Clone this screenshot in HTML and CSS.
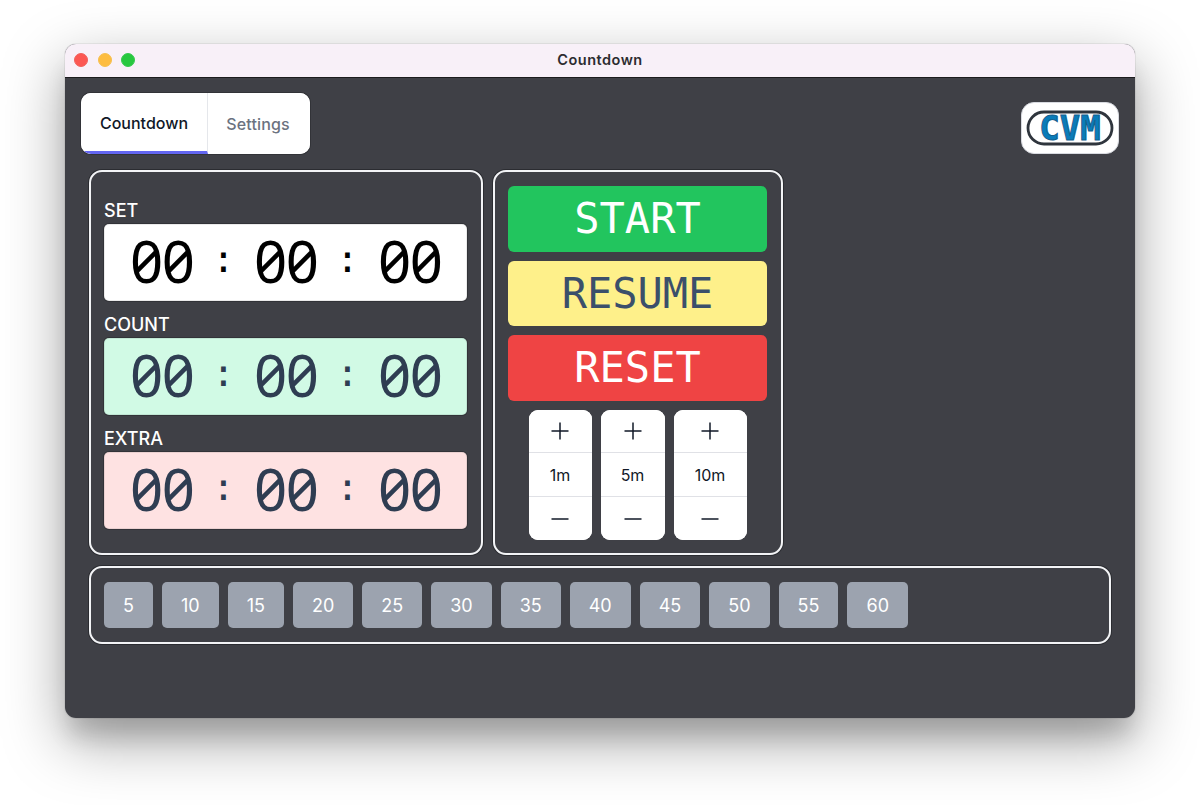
FILE: index.html
```html
<!DOCTYPE html>
<html lang="en">

<head>
    <meta charset="utf-8">
    <title>Countdown</title>
    <link rel="stylesheet" href="styles.css">
</head>

<body>
    <div class="window">
        <div class="titlebar">
            <div class="lights">
                <span class="light light-red"></span>
                <span class="light light-yellow"></span>
                <span class="light light-green"></span>
            </div>
            <div class="title">Countdown</div>
        </div>

        <div class="content">
            <div class="top-row">
                <div class="tabs">
                    <button class="tab tab-active">Countdown</button>
                    <button class="tab">Settings</button>
                </div>
                <div class="logo-box">
                    <svg class="logo" viewBox="0 0 88 38" width="88" height="38">
                        <rect x="2" y="3" width="84" height="32" rx="16" fill="#fff" stroke="#2f353d" stroke-width="2.8"/>
                        <text class="logo-text" x="44" y="30.5" text-anchor="middle">CVM</text>
                    </svg>
                </div>
            </div>

            <div class="panels">
                <div class="panel timers">
                    <div class="timer">
                        <label class="timer-label">SET</label>
                        <div class="timer-box box-set">
                            <span class="digits">00</span><span class="colon">:</span><span class="digits">00</span><span class="colon">:</span><span class="digits">00</span>
                        </div>
                    </div>
                    <div class="timer">
                        <label class="timer-label">COUNT</label>
                        <div class="timer-box box-count">
                            <span class="digits">00</span><span class="colon">:</span><span class="digits">00</span><span class="colon">:</span><span class="digits">00</span>
                        </div>
                    </div>
                    <div class="timer">
                        <label class="timer-label">EXTRA</label>
                        <div class="timer-box box-extra">
                            <span class="digits">00</span><span class="colon">:</span><span class="digits">00</span><span class="colon">:</span><span class="digits">00</span>
                        </div>
                    </div>
                </div>

                <div class="panel controls">
                    <button class="big-btn btn-start">START</button>
                    <button class="big-btn btn-resume">RESUME</button>
                    <button class="big-btn btn-reset">RESET</button>
                    <div class="steppers">
                        <div class="stepper stepper-1m">
                            <button class="step">
                                <svg viewBox="0 0 18 18" width="18" height="18"><path d="M0.5 9H17.5M9 0.5V17.5"/></svg>
                            </button>
                            <div class="step step-label">1m</div>
                            <button class="step">
                                <svg viewBox="0 0 18 18" width="18" height="18"><path d="M0.5 9H17.5"/></svg>
                            </button>
                        </div>
                        <div class="stepper stepper-5m">
                            <button class="step">
                                <svg viewBox="0 0 18 18" width="18" height="18"><path d="M0.5 9H17.5M9 0.5V17.5"/></svg>
                            </button>
                            <div class="step step-label">5m</div>
                            <button class="step">
                                <svg viewBox="0 0 18 18" width="18" height="18"><path d="M0.5 9H17.5"/></svg>
                            </button>
                        </div>
                        <div class="stepper stepper-10m">
                            <button class="step">
                                <svg viewBox="0 0 18 18" width="18" height="18"><path d="M0.5 9H17.5M9 0.5V17.5"/></svg>
                            </button>
                            <div class="step step-label">10m</div>
                            <button class="step">
                                <svg viewBox="0 0 18 18" width="18" height="18"><path d="M0.5 9H17.5"/></svg>
                            </button>
                        </div>
                    </div>
                </div>
            </div>

            <div class="panel presets">
                <button class="preset">5</button>
                <button class="preset">10</button>
                <button class="preset">15</button>
                <button class="preset">20</button>
                <button class="preset">25</button>
                <button class="preset">30</button>
                <button class="preset">35</button>
                <button class="preset">40</button>
                <button class="preset">45</button>
                <button class="preset">50</button>
                <button class="preset">55</button>
                <button class="preset">60</button>
            </div>
        </div>
    </div>
</body>

</html>
```

FILE: styles.css
```css
body {
    font-family: 'Inter', sans-serif;
    background-color: #fff;
    margin: 0;
    padding: 44px 65px 0;
    height: 805px;
    box-sizing: border-box;
    overflow: hidden;
}

button {
    font-family: inherit;
    border: none;
    padding: 0;
    cursor: pointer;
}

.window {
    width: 1070px;
    height: 674px;
    border-radius: 11px;
    overflow: hidden;
    box-shadow: 0 22px 22px -4px rgba(0, 0, 0, 0.14), 0 22px 60px 2px rgba(0, 0, 0, 0.34), 0 0 0 1px rgba(0, 0, 0, 0.06);
    display: flex;
    flex-direction: column;
    background-color: #3f4046;
}

.titlebar {
    height: 33px;
    flex-shrink: 0;
    background-color: #f8f0f8;
    border-bottom: 1px solid #1c1c1e;
    display: flex;
    align-items: center;
    justify-content: center;
    position: relative;
}

.lights {
    position: absolute;
    left: 9px;
    top: 9px;
    display: flex;
    gap: 9.5px;
}

.light {
    width: 14px;
    height: 14px;
    border-radius: 50%;
    box-sizing: border-box;
}

.light-red {
    background-color: #fc5753;
    border: 1px solid #f0605c;
}

.light-yellow {
    background-color: #fdbc40;
    border: 1px solid #f5bf50;
}

.light-green {
    background-color: #27c83f;
    border: 1px solid #38c850;
}

.title {
    font-size: 14.5px;
    font-weight: 600;
    color: #2c2c30;
    letter-spacing: 0.5px;
    padding-bottom: 2px;
}

.content {
    flex: 1;
    padding: 15px 24px 0;
    display: flex;
    flex-direction: column;
}

.top-row {
    display: flex;
    justify-content: space-between;
    align-items: flex-end;
    margin: 0 -8px 16px;
}

.tabs {
    display: flex;
    height: 61px;
    background-color: #fff;
    border-radius: 10px;
    overflow: hidden;
    box-shadow: 0 0 0 1px #323338;
}

.tab {
    background-color: #fff;
    font-size: 16px;
    font-weight: 450;
    color: #6b7280;
    width: 102px;
    letter-spacing: 0.15px;
    padding-right: 2px;
}

.tab-active {
    width: 127px;
    color: #111827;
    border-right: 1px solid #e5e7eb;
    border-bottom: 3px solid #6366f1;
    padding: 1px 0 0;
    letter-spacing: 0;
}

.logo-box {
    width: 98px;
    height: 52px;
    box-sizing: border-box;
    background-color: #fff;
    border: 1px solid #d8dae0;
    border-radius: 13px;
    display: flex;
    align-items: center;
    justify-content: center;
}

.logo-text {
    font-family: 'DejaVu Sans Mono', monospace;
    font-weight: 700;
    font-size: 34px;
    fill: #0a7cb9;
    stroke: #12608f;
    stroke-width: 1;
}

.panels {
    display: flex;
    gap: 10px;
    margin-bottom: 11px;
}

.panel {
    border: 2px solid #f3f4f6;
    border-radius: 13px;
    box-sizing: border-box;
    box-shadow: 0 0 0 1px #2b2c31;
}

.timers {
    width: 394px;
    height: 385px;
    padding: 28px 14px 0 13px;
    display: flex;
    flex-direction: column;
    gap: 13px;
}

.timer-label {
    display: block;
    font-size: 18px;
    font-weight: 500;
    line-height: 22px;
    margin-bottom: 2px;
    color: #fff;
}

.timer-box {
    height: 77px;
    border-radius: 5px;
    display: flex;
    align-items: center;
    justify-content: center;
    color: #2f3d52;
    box-shadow: 0 0 0 1px #323338, inset 0 0 0 1px rgba(0, 0, 0, 0.08);
}

.box-set {
    background-color: #fff;
    color: #000;
}

.box-count {
    background-color: #d1fae5;
}

.box-extra {
    background-color: #fee2e2;
}

.digits {
    font-family: 'Noto Sans', sans-serif;
    font-size: 58px;
    font-weight: 370;
    font-variant-numeric: slashed-zero tabular-nums;
    letter-spacing: -1.5px;
    line-height: 77px;
    width: 63px;
    text-align: center;
    margin-top: -4px;
}

.colon {
    font-family: 'DejaVu Sans Mono', monospace;
    font-size: 38px;
    line-height: 77px;
    width: 61px;
    text-align: center;
    margin-top: -6px;
}

.controls {
    width: 290px;
    height: 385px;
    padding: 14px 14px 0 13px;
    display: flex;
    flex-direction: column;
    gap: 9px;
}

.big-btn {
    height: 65.5px;
    border-radius: 6px;
    font-family: 'DejaVu Sans Mono', monospace;
    font-size: 42px;
    color: #fff;
    flex-shrink: 0;
}

.btn-start {
    background-color: #22c55e;
}

.btn-resume {
    background-color: #fef08a;
    color: #3b4f6b;
}

.btn-reset {
    background-color: #ef4444;
}

.steppers {
    display: flex;
    justify-content: center;
    gap: 9px;
}

.stepper {
    height: 130.5px;
    background-color: #fff;
    border-radius: 9px;
    overflow: hidden;
    display: flex;
    flex-direction: column;
}

.stepper-1m {
    width: 63px;
}

.stepper-5m {
    width: 64px;
}

.stepper-10m {
    width: 73px;
}

.step {
    flex: 1;
    background-color: #fff;
    display: flex;
    align-items: center;
    justify-content: center;
    font-size: 16px;
    color: #111827;
}

.step svg {
    fill: none;
    stroke: #111827;
    stroke-width: 1.5;
}

.step-label {
    border-top: 1.5px solid #e0e1e6;
    border-bottom: 1.5px solid #e0e1e6;
}

.presets {
    height: 78px;
    padding: 14px 13px;
    display: flex;
    gap: 9px;
}

.preset {
    background-color: #9ca3af;
    color: #fff;
    font-size: 18px;
    padding: 0 19px;
    border-radius: 5px;
    height: 46px;
}
```
